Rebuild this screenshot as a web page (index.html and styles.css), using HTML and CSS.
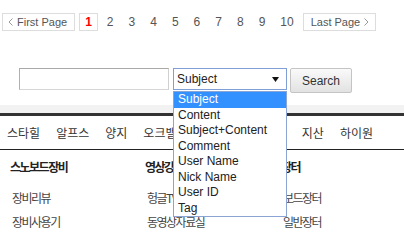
FILE: index.html
```html
<!DOCTYPE html>
<html lang="ko">
<head>
    <meta charset="UTF-8">
    <meta name="viewport" content="width=device-width, initial-scale=1.0">
    <title>Board</title>
    <link rel="stylesheet" href="styles.css">
</head>
<body>
    <!-- Paging -->
    <div class="paging">
        <a class="page-btn first" href="#">
            <svg width="5" height="8" viewBox="0 0 5 8"><path d="M4.5 0.5 L1 4 L4.5 7.5" fill="none" stroke="#999" stroke-width="1"/></svg>
            First Page
        </a>
        <a class="page-num current" href="#">1</a>
        <a class="page-num" href="#">2</a>
        <a class="page-num" href="#">3</a>
        <a class="page-num" href="#">4</a>
        <a class="page-num" href="#">5</a>
        <a class="page-num" href="#">6</a>
        <a class="page-num" href="#">7</a>
        <a class="page-num" href="#">8</a>
        <a class="page-num" href="#">9</a>
        <a class="page-num" href="#">10</a>
        <a class="page-btn last" href="#">
            Last Page
            <svg width="5" height="8" viewBox="0 0 5 8"><path d="M0.5 0.5 L4 4 L0.5 7.5" fill="none" stroke="#999" stroke-width="1"/></svg>
        </a>
    </div>

    <!-- Search -->
    <form class="search" action="#">
        <input type="text" class="search-input">
        <div class="select-wrap">
            <div class="select-box">
                <span>Subject</span>
                <svg width="7" height="5" viewBox="0 0 7 5"><path d="M0 0 H7 L3.5 5 Z" fill="#111"/></svg>
            </div>
            <ul class="select-list">
                <li class="selected">Subject</li>
                <li>Content</li>
                <li>Subject+Content</li>
                <li>Comment</li>
                <li>User Name</li>
                <li>Nick Name</li>
                <li>User ID</li>
                <li>Tag</li>
            </ul>
        </div>
        <button type="button" class="search-btn">Search</button>
    </form>

    <div class="band"></div>

    <!-- Resort menu -->
    <nav class="menu">
        <a href="#">스타힐</a>
        <a href="#">알프스</a>
        <a href="#">양지</a>
        <a href="#">오크밸리</a>
        <a href="#">용평</a>
        <a href="#">웰리힐리</a>
        <a href="#">지산</a>
        <a href="#">하이원</a>
    </nav>

    <!-- Board links -->
    <div class="columns">
        <div class="col">
            <h4>스노보드장비</h4>
            <a href="#">장비리뷰</a>
            <a href="#">장비사용기</a>
        </div>
        <div class="col">
            <h4>영상강좌</h4>
            <a href="#">헝글TV</a>
            <a href="#">동영상자료실</a>
        </div>
        <div class="col">
            <h4>장터</h4>
            <a href="#">보드장터</a>
            <a href="#">일반장터</a>
        </div>
    </div>
</body>
</html>
```

FILE: styles.css
```css
/* General */
body {
    margin: 0;
    padding: 0;
    font-family: 'Liberation Sans', 'Noto Sans CJK KR', sans-serif;
    background: #fff;
    color: #444;
}

a {
    text-decoration: none;
}

/* Paging */
.paging {
    display: flex;
    align-items: center;
    gap: 3px;
    padding: 13px 0 0 2px;
    height: 18px;
}

.page-btn {
    display: flex;
    align-items: center;
    gap: 4px;
    height: 16px;
    border: 1px solid #ddd;
    font-size: 11px;
    color: #555;
    box-sizing: content-box;
}

.page-btn.first {
    padding: 0 7px 0 5px;
    margin-right: 1px;
}

.page-btn.last {
    padding: 0 6px 0 7px;
}

.page-num {
    display: block;
    height: 16px;
    line-height: 16px;
    padding: 0 5px;
    border: 1px solid transparent;
    font-size: 12px;
    color: #555;
}

.page-num.current {
    border-color: #ddd;
    color: #f00;
    font-weight: bold;
}

/* Search */
.search {
    display: flex;
    align-items: flex-start;
    margin: 37px 0 0;
    padding-left: 19px;
}

.search-input {
    width: 150px;
    height: 22px;
    margin: 0;
    padding: 0 3px;
    border: 1px solid;
    border-color: #a9a9a9 #d0d0d0 #d6d6d6 #b0b0b0;
    box-sizing: border-box;
}

.select-wrap {
    position: relative;
    margin-left: 4px;
}

.select-box {
    display: flex;
    align-items: center;
    justify-content: space-between;
    width: 114px;
    height: 22px;
    padding: 0 7px 0 3px;
    border: 1px solid #7f9fd6;
    box-sizing: border-box;
    font-size: 12px;
    color: #222;
    background: #fff;
}

.select-list {
    position: absolute;
    top: 23px;
    left: 0;
    width: 114px;
    margin: 0;
    padding: 0;
    list-style: none;
    border: 1px solid #8aa4d4;
    box-sizing: border-box;
    background: #fff;
    z-index: 10;
}

.select-list li {
    height: 15.5px;
    line-height: 15px;
    padding-left: 4px;
    font-size: 12px;
    color: #222;
}

.select-list li.selected {
    background: #3391ff;
    color: #fff;
}

.search-btn {
    width: 62px;
    height: 25px;
    margin-left: 3px;
    border: 1px solid #c4c4c4;
    border-radius: 2px;
    background: linear-gradient(#fafafa, #e2e2e2);
    font-family: 'Liberation Sans', sans-serif;
    font-size: 12px;
    color: #333;
    padding: 0;
}

/* Menu */
.band {
    margin-top: 12px;
    height: 8px;
    background: #f2f2f2;
    border-bottom: 3px solid #333;
}

.menu {
    display: flex;
    gap: 16px;
    height: 33px;
    align-items: center;
    padding-left: 7px;
    border-bottom: 1px solid #222;
    font-family: 'Noto Sans CJK KR', sans-serif;
}

.menu a {
    font-size: 12px;
    line-height: 16px;
    color: #333;
}

/* Columns */
.columns {
    display: grid;
    grid-template-columns: 135px 136px 1fr;
    padding: 9px 0 0 10px;
    font-family: 'Noto Sans CJK KR', sans-serif;
}

.col h4 {
    margin: 0 0 15px;
    font-size: 12px;
    line-height: 16px;
    letter-spacing: -1.5px;
    color: #222;
}

.col a {
    display: block;
    margin: 0 0 8px 2px;
    font-size: 12px;
    line-height: 16px;
    letter-spacing: -1.5px;
    color: #444;
}
```
